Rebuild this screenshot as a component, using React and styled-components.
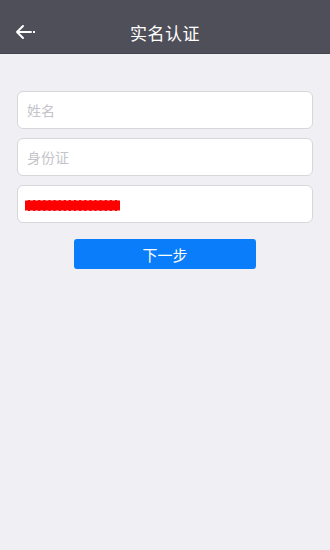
import React from 'react'
import styled, { createGlobalStyle } from 'styled-components'

const GlobalStyle = createGlobalStyle`
    html, body {
        margin: 0;
        padding: 0;
        background: #efeff4;
        font-family: "Noto Sans CJK SC", "Liberation Sans", sans-serif;
    }
`

const Page = styled.div`
    width: 330px;
    height: 550px;
    background: #efeff4;
    display: flex;
    flex-direction: column;
`

const Header = styled.div`
    height: 54px;
    background: #4f4f59;
    display: flex;
    align-items: center;
    justify-content: center;
    position: relative;
    border-bottom: 1px solid #45454e;
    box-sizing: border-box;
`

const BackButton = styled.div`
    position: absolute;
    left: 15px;
    top: 24px;
    width: 22px;
    height: 16px;
    display: flex;
`

const Title = styled.h1`
    margin: 0;
    margin-top: 11px;
    color: #ffffff;
    font-size: 17px;
    font-weight: 400;
    letter-spacing: 0.5px;
`

const Form = styled.div`
    padding: 37px 17px 0;
    display: flex;
    flex-direction: column;
    gap: 9px;
`

const Field = styled.div`
    height: 38px;
    background: #ffffff;
    border: 1px solid #d6d6db;
    border-radius: 6px;
    box-sizing: border-box;
    display: flex;
    align-items: center;
    padding-left: 9px;
    font-size: 14px;
    color: #c4c4c9;
`

const Masked = styled.div`
    width: 95px;
    height: 11px;
    margin-left: -2px;
    margin-top: 2px;
    background: #ff0000;
    border-top: 1px dashed #ff8080;
    border-bottom: 1px dashed #ff8080;
    box-sizing: border-box;
`

const NextButton = styled.button`
    align-self: center;
    width: 182px;
    height: 30px;
    margin-top: 7px;
    border: none;
    border-radius: 3px;
    background: #0a7dfb;
    color: #ffffff;
    font-family: inherit;
    font-size: 15px;
    padding: 0;
`

export default function App() {
  return (
    <>
      <GlobalStyle />
      <Page>
        <Header>
          <BackButton>
            <svg width="22" height="16" viewBox="0 0 22 16">
              <path d="M8 2 L2 8 L8 14 M2 8 H16" stroke="#fff" strokeWidth="2" fill="none" strokeLinecap="round" strokeLinejoin="round" />
              <rect x="18" y="7" width="2" height="2" fill="#fff" />
            </svg>
          </BackButton>
          <Title>实名认证</Title>
        </Header>
        <Form>
          <Field>姓名</Field>
          <Field>身份证</Field>
          <Field>
            <Masked />
          </Field>
          <NextButton>下一步</NextButton>
        </Form>
      </Page>
    </>
  )
}
